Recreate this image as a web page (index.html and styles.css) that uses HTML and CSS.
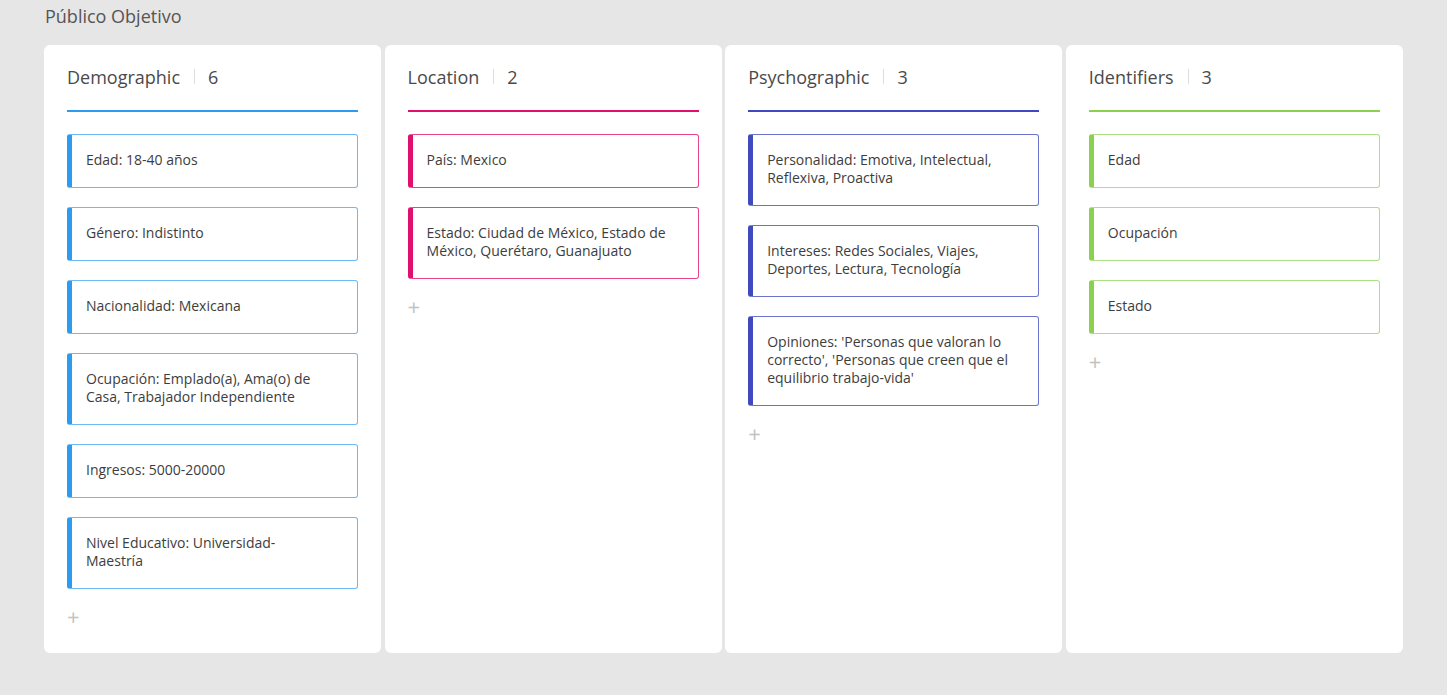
FILE: index.html
```html
<!DOCTYPE html>
<html lang="es">
<head>
<meta charset="utf-8">
<title>Público Objetivo</title>
<link rel="stylesheet" href="styles.css">
</head>
<body>
<div class="page">
  <h1 class="title">Público Objetivo</h1>
  <div class="board">
    <section class="column demo">
      <header class="col-head"><span class="col-name">Demographic</span><span class="sep"></span><span class="count">6</span></header>
      <div class="cards">
        <div class="card">Edad: 18-40 años</div>
        <div class="card">Género: Indistinto</div>
        <div class="card">Nacionalidad: Mexicana</div>
        <div class="card">Ocupación: Emplado(a), Ama(o) de Casa, Trabajador Independiente</div>
        <div class="card">Ingresos: 5000-20000</div>
        <div class="card">Nivel Educativo: Universidad-<br>Maestría</div>
      </div>
      <div class="add">+</div>
    </section>
    <section class="column loc">
      <header class="col-head"><span class="col-name">Location</span><span class="sep"></span><span class="count">2</span></header>
      <div class="cards">
        <div class="card">País: Mexico</div>
        <div class="card">Estado: Ciudad de México, Estado de México, Querétaro, Guanajuato</div>
      </div>
      <div class="add">+</div>
    </section>
    <section class="column psy">
      <header class="col-head"><span class="col-name">Psychographic</span><span class="sep"></span><span class="count">3</span></header>
      <div class="cards">
        <div class="card">Personalidad: Emotiva, Intelectual, Reflexiva, Proactiva</div>
        <div class="card">Intereses: Redes Sociales, Viajes, Deportes, Lectura, Tecnología</div>
        <div class="card">Opiniones: 'Personas que valoran lo correcto', 'Personas que creen que el equilibrio trabajo-vida'</div>
      </div>
      <div class="add">+</div>
    </section>
    <section class="column ident">
      <header class="col-head"><span class="col-name">Identifiers</span><span class="sep"></span><span class="count">3</span></header>
      <div class="cards">
        <div class="card">Edad</div>
        <div class="card">Ocupación</div>
        <div class="card">Estado</div>
      </div>
      <div class="add">+</div>
    </section>
  </div>
</div>
</body>
</html>
```

FILE: styles.css
```css
* { box-sizing: border-box; }
html, body {
  margin: 0;
  padding: 0;
  background: #e6e6e6;
  font-family: "Open Sans", "Noto Sans", sans-serif;
  color: #444;
}
.page {
  padding: 3px 44px 0 44px;
  height: 695px;
}
.title {
  margin: 0 0 16px 1px;
  font-size: 18px;
  font-weight: 400;
  line-height: 26px;
  color: #555;
}
.board {
  display: grid;
  grid-template-columns: repeat(4, 337px);
  column-gap: 3.6px;
}
.column {
  background: #fff;
  border-radius: 6px;
  height: 608px;
  padding: 0 23px;
}
.col-head {
  display: flex;
  align-items: center;
  height: 67px;
  padding-bottom: 2px;
  border-bottom: 2px solid var(--c);
  font-size: 18px;
  line-height: 24px;
  color: #4a4a4a;
}
.sep {
  width: 1px;
  height: 15px;
  background: #ddd;
  margin: 0 13px 0 14px;
}
.cards {
  display: flex;
  flex-direction: column;
  gap: 19px;
  margin-top: 22px;
}
.card {
  border: 1px solid var(--cl);
  border-left: 5px solid var(--c);
  border-radius: 3px;
  padding: 16px 14px 18px 14px;
  font-size: 14px;
  line-height: 18px;
  color: #3d3d3d;
}
.add {
  margin: 15px 0 0 0;
  font-size: 22px;
  line-height: 24px;
  color: #c2c2c2;
  font-weight: 400;
}
.demo { --c: #2d9bf0; --cl: #6cb9f4; }
.loc { --c: #e0116c; --cl: #e8438b; }
.psy { --c: #3f4bbd; --cl: #6a74cc; }
.ident { --c: #8bd04e; --cl: #addf86; }
```
